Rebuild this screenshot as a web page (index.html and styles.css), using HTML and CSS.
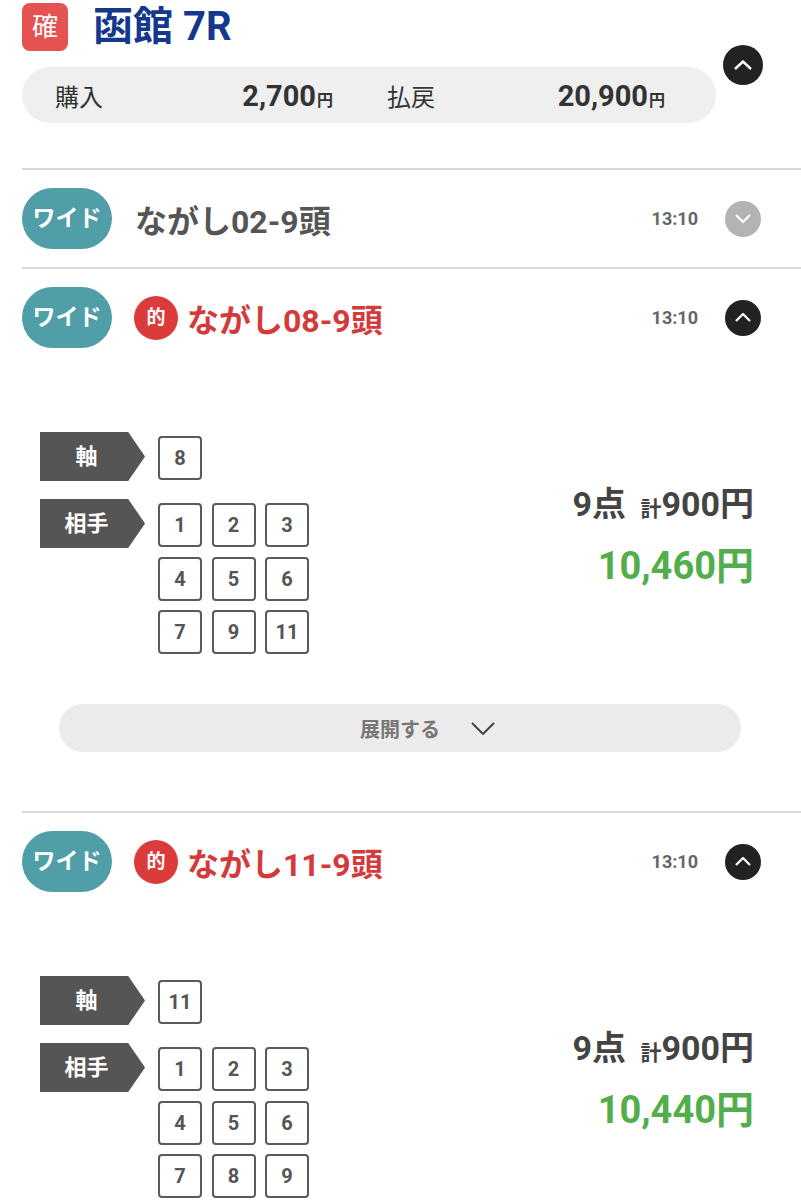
FILE: index.html
```html
<!DOCTYPE html>
<html lang="ja">
<head>
    <meta charset="UTF-8">
    <meta name="viewport" content="width=device-width, initial-scale=1.0">
    <title>函館 7R</title>
    <link rel="stylesheet" href="styles.css">
</head>
<body>
    <header class="race">
        <div class="race-main">
            <div class="race-title">
                <span class="kaku">確</span>
                <h1>函館 7R</h1>
            </div>
            <div class="summary">
                <div class="sum-cell">
                    <span class="sum-label">購入</span>
                    <span class="sum-val">2,700<small>円</small></span>
                </div>
                <div class="sum-cell">
                    <span class="sum-label">払戻</span>
                    <span class="sum-val">20,900<small>円</small></span>
                </div>
            </div>
        </div>
        <button class="toggle big dark">
            <svg width="18" height="10" viewBox="0 0 18 10"><polyline points="1,9 9,1.5 17,9" fill="none" stroke="#fff" stroke-width="2.4"/></svg>
        </button>
    </header>

    <ul class="bets">
        <!-- 閉じている -->
        <li class="bet">
            <div class="bet-head">
                <span class="kind">ワイド</span>
                <span class="bet-name">ながし02-9頭</span>
                <span class="time">13:10</span>
                <button class="toggle gray">
                    <svg width="16" height="9" viewBox="0 0 16 9"><polyline points="1,1 8,8 15,1" fill="none" stroke="#fff" stroke-width="2.2"/></svg>
                </button>
            </div>
        </li>

        <li class="bet">
            <div class="bet-head">
                <span class="kind">ワイド</span>
                <span class="hit">的</span>
                <span class="bet-name win">ながし08-9頭</span>
                <span class="time">13:10</span>
                <button class="toggle dark">
                    <svg width="16" height="9" viewBox="0 0 16 9"><polyline points="1,8 8,1 15,8" fill="none" stroke="#fff" stroke-width="2.2"/></svg>
                </button>
            </div>
            <div class="bet-body">
                <div class="bet-detail">
                    <div class="picks">
                        <div class="pick-row">
                            <span class="pick-label">軸</span>
                            <div class="nums">
                                <span class="num">8</span>
                            </div>
                        </div>
                        <div class="pick-row">
                            <span class="pick-label">相手</span>
                            <div class="nums">
                                <span class="num">1</span>
                                <span class="num">2</span>
                                <span class="num">3</span>
                                <span class="num">4</span>
                                <span class="num">5</span>
                                <span class="num">6</span>
                                <span class="num">7</span>
                                <span class="num">9</span>
                                <span class="num">11</span>
                            </div>
                        </div>
                    </div>
                    <div class="sums">
                        <p class="points">9点 <small>計</small>900円</p>
                        <p class="payout">10,460円</p>
                    </div>
                </div>
                <button class="expand">展開する
                    <svg width="24" height="13" viewBox="0 0 24 13"><polyline points="1,1 12,12 23,1" fill="none" stroke="#444" stroke-width="2"/></svg>
                </button>
            </div>
        </li>

        <li class="bet">
            <div class="bet-head">
                <span class="kind">ワイド</span>
                <span class="hit">的</span>
                <span class="bet-name win">ながし11-9頭</span>
                <span class="time">13:10</span>
                <button class="toggle dark">
                    <svg width="16" height="9" viewBox="0 0 16 9"><polyline points="1,8 8,1 15,8" fill="none" stroke="#fff" stroke-width="2.2"/></svg>
                </button>
            </div>
            <div class="bet-body">
                <div class="bet-detail">
                    <div class="picks">
                        <div class="pick-row">
                            <span class="pick-label">軸</span>
                            <div class="nums">
                                <span class="num">11</span>
                            </div>
                        </div>
                        <div class="pick-row">
                            <span class="pick-label">相手</span>
                            <div class="nums">
                                <span class="num">1</span>
                                <span class="num">2</span>
                                <span class="num">3</span>
                                <span class="num">4</span>
                                <span class="num">5</span>
                                <span class="num">6</span>
                                <span class="num">7</span>
                                <span class="num">8</span>
                                <span class="num">9</span>
                            </div>
                        </div>
                    </div>
                    <div class="sums">
                        <p class="points">9点 <small>計</small>900円</p>
                        <p class="payout">10,440円</p>
                    </div>
                </div>
            </div>
        </li>
    </ul>
</body>
</html>
```

FILE: styles.css
```css
body {
    margin: 0;
    font-family: Roboto, "Noto Sans CJK JP", sans-serif;
    color: #333;
    background: #fff;
}
button {
    font-family: inherit;
    border: none;
    padding: 0;
    cursor: pointer;
}
.race {
    display: flex;
    padding: 3px 0 0 22px;
}
.race-main {
    width: 694px;
}
.race-title {
    display: flex;
    align-items: center;
    height: 48px;
}
.kaku {
    width: 46px;
    height: 48px;
    border-radius: 8px;
    background: #e45352;
    color: #fff;
    font-size: 26px;
    line-height: 48px;
    text-align: center;
}
.race-title h1 {
    margin: 0 0 0 25px;
    font-size: 40px;
    line-height: 48px;
    font-weight: 700;
    color: #14398c;
}
.summary {
    margin-top: 16px;
    height: 56px;
    border-radius: 28px;
    background: #efefef;
    display: grid;
    grid-template-columns: 278px 278px;
    column-gap: 54px;
    padding-left: 33px;
    align-items: center;
}
.sum-cell {
    display: flex;
    justify-content: space-between;
    align-items: baseline;
}
.sum-label {
    font-size: 24px;
    color: #333;
}
.sum-val {
    font-size: 29px;
    font-weight: 700;
    color: #333;
}
.sum-val small {
    font-size: 16px;
    margin-left: 1px;
}
.toggle {
    flex: none;
    width: 36px;
    height: 36px;
    border-radius: 50%;
    display: flex;
    align-items: center;
    justify-content: center;
}
.toggle.big {
    width: 40px;
    height: 40px;
    margin: 42px 0 0 7px;
}
.dark {
    background: #222;
}
.gray {
    background: #b3b3b3;
}
.bets {
    list-style: none;
    margin: 45px 0 0 22px;
    padding: 0;
}
.bet {
    border-top: 2px solid #d9d9d9;
}
.bet-head {
    display: flex;
    align-items: center;
    padding: 18px 40px 18px 0;
}
.kind {
    width: 90px;
    height: 61px;
    border-radius: 31px;
    background: #509ea7;
    color: #fff;
    font-size: 23px;
    font-weight: 700;
    line-height: 61px;
    text-align: center;
}
.hit {
    width: 44px;
    height: 44px;
    margin-left: 22px;
    border-radius: 50%;
    background: #dc3b3b;
    color: #fff;
    font-size: 19px;
    font-weight: 700;
    line-height: 44px;
    text-align: center;
}
.bet-name {
    margin-left: 23px;
    font-size: 32px;
    font-weight: 700;
    color: #555;
}
.hit + .bet-name {
    margin-left: 9px;
}
.bet-name.win {
    color: #d53a3a;
}
.time {
    margin-left: auto;
    margin-right: 27px;
    font-size: 18px;
    font-weight: 700;
    color: #666;
}
.bet-body {
    padding: 66px 40px 59px 18px;
}
.bet-detail {
    display: flex;
}
.pick-row {
    display: flex;
    align-items: flex-start;
}
.pick-row + .pick-row {
    margin-top: 18px;
}
.pick-label {
    width: 105px;
    height: 49px;
    padding-right: 12px;
    box-sizing: border-box;
    background: #555;
    color: #fff;
    font-size: 22px;
    font-weight: 700;
    line-height: 49px;
    text-align: center;
    clip-path: polygon(0 0, 84% 0, 100% 50%, 84% 100%, 0 100%);
}
.nums {
    margin: 4px 0 0 13px;
    display: grid;
    grid-template-columns: repeat(3, 44px);
    gap: 9.5px;
}
.num {
    width: 44px;
    height: 44px;
    box-sizing: border-box;
    border: 2px solid #5a5a5a;
    border-radius: 4px;
    font-size: 20px;
    font-weight: 700;
    color: #555;
    line-height: 40px;
    text-align: center;
}
.sums {
    margin-left: auto;
    padding-right: 7px;
    text-align: right;
}
.sums p {
    margin: 0;
    font-weight: 700;
}
.points {
    margin-top: 52px !important;
    font-size: 34px;
    line-height: 40px;
    color: #444;
}
.points small {
    font-size: 21px;
    margin-left: 6px;
}
.payout {
    margin-top: 14px !important;
    font-size: 38px;
    line-height: 46px;
    color: #52ad4b;
}
.expand {
    display: flex;
    align-items: center;
    justify-content: center;
    gap: 31px;
    width: calc(100% - 39px);
    height: 48px;
    margin: 50px 20px 0 19px;
    padding-left: 55px;
    border-radius: 24px;
    background: #ebebeb;
    color: #777;
    font-size: 20px;
    font-weight: 700;
}
```
